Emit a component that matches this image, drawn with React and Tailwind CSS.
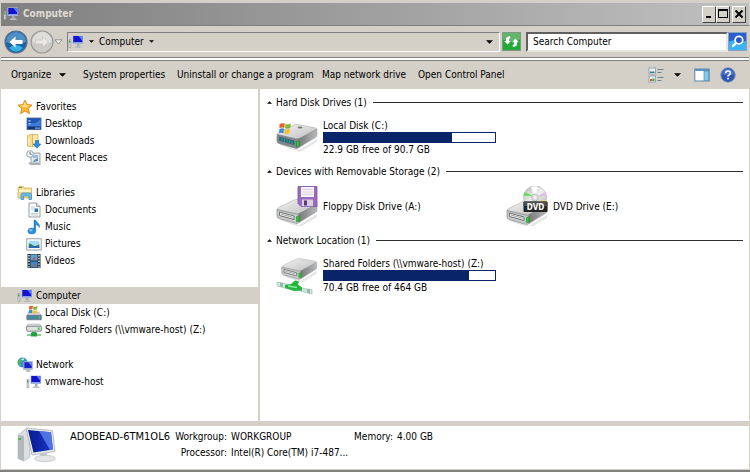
import { useState } from "react";

/* ---------- small icons (16px grid) ---------- */

function Svg({ size = "size-4", box = "0 0 16 16", children }) {
  return (
    <svg viewBox={box} className={`${size} shrink-0`} aria-hidden="true">
      {children}
    </svg>
  );
}

function PcIcon() {
  return (
    <Svg>
      <path d="M1 5.500h1.800v8H1z" fill="#dfe1e3" stroke="#8c9196" strokeWidth="0.6" />
      <rect x="1" y="6.500" width="1.400" height="2" fill="#3aa648" />
      <rect x="4.500" y="1.500" width="10.500" height="8.500" fill="#b4bfdc" />
      <rect x="5.300" y="2" width="9" height="7" fill="#1212cf" />
      <path d="M10.500 2h3.800v5z" fill="#5c7df0" />
      <path d="M5.300 8h9v1.500h-9z" fill="#8c9fe0" />
      <path d="M9 10h2.500v2.500H9z" fill="#a5a9b0" />
      <path d="M6.500 14l1.500-1.800h4.500L14 14z" fill="#b9bcc0" />
    </Svg>
  );
}

function StarIcon() {
  return (
    <Svg>
      <path
        d="M8 1l2 4.600 5 .5-3.700 3.400 1.100 5.200L8 12l-4.400 2.700 1.100-5.200L1 6.100l5-.5z"
        fill="#fdb52c"
        stroke="#dd8616"
        strokeWidth="0.9"
        strokeLinejoin="round"
      />
      <path d="M8 2.800l1.400 3.500 3.800.4-5.200 2-5.200-2 3.800-.4z" fill="#ffe08a" />
    </Svg>
  );
}

function DesktopIcon() {
  return (
    <Svg>
      <rect x="1" y="2" width="14" height="11.500" fill="#1f56b5" stroke="#4a6a9c" strokeWidth="0.8" />
      <path d="M1.500 9C6 5 9 10 14.500 3v7h-13z" fill="#3f7fdc" />
      <rect x="2.500" y="4" width="2" height="1.500" fill="#a9c6ee" />
      <rect x="2.500" y="7" width="2" height="1.500" fill="#a9c6ee" />
      <rect x="1.500" y="11" width="13" height="2.300" fill="#1d3566" />
      <rect x="9" y="11.500" width="5" height="1.300" fill="#6ea1dc" />
    </Svg>
  );
}

function DownloadsIcon() {
  return (
    <Svg>
      <path d="M1.500 2.500l5-1.500v13l-5-1z" fill="#f7dd8b" stroke="#d0a94c" strokeWidth="0.7" />
      <path d="M6.500 1.500h5.500v12H6.500z" fill="#fbe9ac" stroke="#d0a94c" strokeWidth="0.7" />
      <path d="M3 5v7" stroke="#fff6d0" />
      <path d="M9.500 7.500h3V11h2.300L11 15.200 7.200 11h2.300z" fill="#2d93e0" stroke="#1b68b4" strokeWidth="0.7" />
    </Svg>
  );
}

function RecentIcon() {
  return (
    <Svg>
      <path d="M5 3h9v11H5z" fill="#dfe7ec" stroke="#8e979e" strokeWidth="0.8" />
      <path d="M7 5h5v3H7z" fill="#9dbfd6" />
      <path d="M8 10l4-2v3l-5 1z" fill="#5d93ba" />
      <path d="M2 12.500h11l2 2.500H4z" fill="#aab2b7" />
      <circle cx="4" cy="4" r="3.300" fill="#f7f8f9" stroke="#8e979e" strokeWidth="0.9" />
      <path d="M4 2v2.200h1.800" fill="none" stroke="#555" strokeWidth="0.8" />
    </Svg>
  );
}

function LibrariesIcon() {
  return (
    <Svg>
      <path d="M1 3l1-1.500h4L7 3h7.500v10H1z" fill="#f3dc8c" stroke="#c9a64a" strokeWidth="0.7" />
      <path d="M2 4.500h11.500V7H2z" fill="#fff3c4" />
      <rect x="2" y="2" width="3" height="1" fill="#61ad4c" />
      <path d="M4 14.500V9.500Q4 8 5.500 8h7Q14.500 8 14.500 9.500V14.500H12V11H6.500V14.500Z" fill="#6dbce8" stroke="#3a88bd" strokeWidth="0.7" />
    </Svg>
  );
}

function DocumentsIcon() {
  return (
    <Svg>
      <path d="M3 1h7.500L14 4.500V15H3z" fill="#fbfcfd" stroke="#8b9197" strokeWidth="0.9" />
      <path d="M10.500 1v3.500H14" fill="#d8dde2" stroke="#8b9197" strokeWidth="0.8" />
      <path d="M5 5h4M5 7h3M5 11.500h7M5 13h7" stroke="#b4c1cd" strokeWidth="0.8" />
      <rect x="8.500" y="6.500" width="3.500" height="3.500" fill="#2d76bb" />
    </Svg>
  );
}

function MusicIcon() {
  return (
    <Svg>
      <path d="M8 1h1.600c.4 2.400 4.600 3 3.700 7.500-.8-2-2-2.600-3.600-2.700V12H8z" fill="#2e8fd8" stroke="#1c6db3" strokeWidth="0.5" />
      <ellipse cx="5.800" cy="12" rx="4" ry="3" fill="#2e8fd8" stroke="#1c6db3" strokeWidth="0.5" />
      <ellipse cx="4.800" cy="11.200" rx="1.800" ry="1" fill="#8fcaf3" />
    </Svg>
  );
}

function PicturesIcon() {
  return (
    <Svg>
      <rect x="0.800" y="2.800" width="14.400" height="11.200" fill="#fff" stroke="#8d9399" strokeWidth="0.9" />
      <rect x="2.800" y="4.800" width="10.500" height="7.200" fill="#a5dbf3" />
      <path d="M2.800 7.500q2 0 4 1.800t6.500-1V12H2.800z" fill="#2b7d6b" />
      <path d="M2.800 10.300h10.500V12H2.800z" fill="#2c67b1" />
    </Svg>
  );
}

function VideosIcon() {
  return (
    <Svg>
      <rect x="1.500" y="1" width="13" height="14" fill="#2b3238" />
      <rect x="4.500" y="1.500" width="7" height="6" fill="#5da3d4" />
      <rect x="4.500" y="8.500" width="7" height="6" fill="#3f8ac6" />
      <path d="M6 6.500l2-3 2 3zM6 13.500l2-3 2 3z" fill="#a5606a" />
      <path d="M3 2v13M13 2v13" stroke="#e7ecef" strokeWidth="1.400" strokeDasharray="1.400 1.400" />
    </Svg>
  );
}

function WinFlag() {
  return (
    <>
      <path d="M0 1.200Q2 0 4 .8L3.500 4Q1.800 3.300 0 4.200z" fill="#e8622c" />
      <path d="M4.500 1Q6.500 1.900 8.500.8L8 4Q6 5 4.100 4.100z" fill="#7fb83c" />
      <path d="M0 4.800Q1.800 3.900 3.400 4.600L2.900 8Q1 7.200-.5 8z" fill="#3c8be0" />
      <path d="M4 4.700Q6 5.600 7.900 4.600L7.400 8Q5.500 9 3.500 8.100z" fill="#f6c12c" />
    </>
  );
}

function LocalDiskSmallIcon() {
  return (
    <Svg>
      <path d="M3 7h9.500l3 3.500H.8z" fill="#d5d8db" stroke="#8b9094" strokeWidth="0.5" />
      <rect x="0.800" y="10.300" width="14.600" height="4.500" rx="0.600" fill="#5d7f99" stroke="#5b656e" strokeWidth="0.6" />
      <rect x="2" y="11.600" width="8" height="1.800" fill="#2e93a5" />
      <rect x="12.500" y="11.500" width="1.600" height="2" fill="#33d64a" />
      <g transform="translate(3 .3)">
        <WinFlag />
      </g>
    </Svg>
  );
}

function SharedSmallIcon() {
  return (
    <Svg>
      <path d="M2 2.200h12l1.500 2.300H.5z" fill="#eceeef" stroke="#93989c" strokeWidth="0.6" />
      <rect x="0.600" y="4.200" width="14.800" height="5" rx="1.200" fill="#dfe1e3" stroke="#73787c" strokeWidth="0.9" />
      <rect x="11.800" y="5.500" width="1.700" height="2.300" fill="#2ecc40" />
      <path d="M7 9.500h2V12h6v2H1v-2h6z" fill="#8cc79a" />
      <path d="M5 11l1.500-1h3L11 11v3.500H5z" fill="#22a13f" />
    </Svg>
  );
}

function NetworkIcon() {
  return (
    <Svg>
      <circle cx="5.500" cy="5.500" r="5" fill="#2f8ee0" />
      <path d="M2 2.500q3-2 5-1.500L5.500 4 3 5.500 4 8 2.500 9Q0 6 2 2.500z" fill="#54b948" />
      <path d="M4 2q2-1 3.500-.3L6 3.500z" fill="#d8efff" />
      <rect x="6.500" y="4.500" width="9" height="8" fill="#c4cde0" stroke="#8693ad" strokeWidth="0.5" />
      <rect x="7.300" y="5.200" width="7.500" height="6" fill="#1a1fc6" />
      <path d="M11 5.200h3.800v4z" fill="#6a8cf0" />
      <path d="M8.500 15l1.500-2.500h2.500L14 15z" fill="#b8bcc2" />
    </Svg>
  );
}

function Caret({ tiny }) {
  return (
    <Svg size={tiny ? "w-[5px] h-[3px]" : "w-[7px] h-1"} box="0 0 8 4">
      <path d="M0 0h8L4 4z" fill="#000" />
    </Svg>
  );
}

/* ---------- large drive icons (42px grid) ---------- */

function DriveBody({ dark }) {
  return (
    <>
      <path d="M3 34l20 7 18-11v3L24 43 6 37z" fill="#000" opacity="0.1" />
      <path d="M1 25.500Q1 24 3 23.300L18 16q2-.8 4-.4l17 3.200q3 .7 1 2L24 29.500q-2 1-4 .5z" fill="url(#driveTop)" stroke="#a5a5a5" strokeWidth="0.5" />
      <path d="M1 25.500L20 30q1.500.3 3-.4v9q-1.500 1.200-3.500.6L3 34.500q-2-.6-2-2.500z" fill={dark ? "#7c8a90" : "#c9cacb"} stroke="#77797b" strokeWidth="0.6" />
      <path d="M23 29.600L41 20v6q0 1.500-1.300 2.300L23 38.600z" fill="url(#driveSide)" stroke="#858789" strokeWidth="0.4" />
      <path d="M3.500 28l14.500 4v3.500L3.500 31.500z" fill={dark ? "#1f6a92" : "#ececec"} stroke="#56595b" strokeWidth="0.8" />
      {dark ? (
        <path d="M6 29v3M8.500 30v3M11 30.500v3M13.500 31v3M16 32v3" stroke="#2fb27d" strokeWidth="0.8" />
      ) : (
        <path d="M5 30l11.500 3.200" stroke="#8e9092" strokeWidth="0.8" />
      )}
      <path d="M20.500 32.500l2.500-.8v5.300l-2.500.8z" fill="#22d52c" stroke="#147a1b" strokeWidth="0.5" />
    </>
  );
}

function LocalDiskIcon() {
  return (
    <Svg size="w-[42px] h-10" box="0 8 42 40">
      <DriveBody dark />
      <ellipse cx="24" cy="18.500" rx="2.500" ry="0.900" fill="#777" />
      <g transform="translate(3.500 13.500) scale(1.350)">
        <WinFlag />
      </g>
    </Svg>
  );
}

function FloppyIcon() {
  return (
    <Svg size="w-[42px] h-10" box="0 2 42 40">
      <DriveBody />
      <path d="M22 2.500h19v20H25l-3-3z" fill="#9a6cc0" stroke="#7c50a3" strokeWidth="0.8" />
      <rect x="25" y="3" width="13" height="10" fill="#f6f3fa" />
      <path d="M26 5.500h11M26 8h11M26 10.500h11" stroke="#d3cadf" strokeWidth="0.8" />
      <rect x="26" y="15.500" width="11" height="6.700" fill="#d5d0dc" />
      <rect x="28" y="16.500" width="3" height="5" fill="#5c377f" />
    </Svg>
  );
}

function DvdIcon() {
  return (
    <Svg size="w-[42px] h-10" box="0 1 42 40">
      <DriveBody />
      <circle cx="29" cy="12.500" r="11.500" fill="url(#disc)" stroke="#b0b0b0" strokeWidth="0.6" />
      <path d="M27 11L18.500 7.500l-.8 3z" fill="#4fe04a" />
      <path d="M31 12l8.500-5q.8 2 .8 4z" fill="#dcbfe4" />
      <path d="M33 15l6.500 2 .8-2z" fill="#f1d27b" />
      <path d="M29 12.500L25 2q4-1.500 7 0z" fill="#fff" />
      <circle cx="29" cy="12.500" r="3.500" fill="#dedede" stroke="#aaa" strokeWidth="0.6" />
      <circle cx="29" cy="12.500" r="1.300" fill="#fff" />
      <rect x="17.500" y="16.500" width="24" height="10.500" rx="1" fill="#232323" />
      <path d="M17.500 17.500q0-1 1-1h22q1 0 1 1v3.500h-24z" fill="#4c4c4c" />
      <text x="29.500" y="24.600" textAnchor="middle" fontSize="8" fontWeight="bold" fill="#fff">
        DVD
      </text>
    </Svg>
  );
}

function SharedIcon() {
  return (
    <Svg size="w-[42px] h-10" box="0 1 42 40">
      <g transform="translate(5 -9) scale(.87)">
        <DriveBody />
      </g>
      <path d="M1 28l12 2.500v4.500L1 32zM24 34l12 1.500v4.500L24 37z" fill="#d5e3e4" stroke="#9db0b2" strokeWidth="0.6" />
      <path d="M4 28.500l3 .8v4l-3-.8zM31 35l3 .5v4l-3-.6z" fill="#8fbfa3" />
      <path d="M9 31l6-1 4-3.500 4 1-1 3 4 3v3l-8 .5-9-3z" fill="#22b43c" />
      <path d="M12 32l9 1.500" stroke="#8df09c" strokeWidth="1.400" />
    </Svg>
  );
}

function BigPcIcon() {
  return (
    <Svg size="w-10 h-9" box="0 0 40 36">
      <path d="M1 8l7-5.500 5 .5v27l-6 4-6-2.500z" fill="#dcdee0" stroke="#a9acaf" strokeWidth="0.6" />
      <path d="M1 8l6 1v25l-6-2.500z" fill="#b5b8bb" />
      <rect x="1.500" y="11" width="2.500" height="2" fill="#43b649" />
      <path d="M9 1l26.500 2.500L38 24.500 15 28z" fill="#e4e7ea" stroke="#a5a9ae" strokeWidth="0.7" />
      <path d="M11 3l23 2.200 2 17.300L16.500 25.500z" fill="url(#screen)" />
      <path d="M22 4l12 1.200 2 17.300-3 .5z" fill="#5c84ec" opacity="0.8" />
      <path d="M23 27l7-1v5h-6z" fill="#c4c7ca" />
      <ellipse cx="28" cy="31.500" rx="10.500" ry="3.200" fill="#e3e5e7" stroke="#b4b7ba" strokeWidth="0.6" />
    </Svg>
  );
}

function Gradients() {
  return (
    <svg className="absolute size-0" aria-hidden="true">
      <defs>
        <linearGradient id="driveTop" x1="0" y1="0" x2="1" y2="1">
          <stop offset="0" stopColor="#f4f4f4" />
          <stop offset="1" stopColor="#bcbcbd" />
        </linearGradient>
        <linearGradient id="driveSide" x1="0" y1="0" x2="1" y2="0">
          <stop offset="0" stopColor="#77797b" />
          <stop offset="1" stopColor="#b9babb" />
        </linearGradient>
        <linearGradient id="disc" x1="0" y1="0" x2="1" y2="1">
          <stop offset="0" stopColor="#b5b5b5" />
          <stop offset="0.500" stopColor="#f0f0f0" />
          <stop offset="1" stopColor="#b0b0b0" />
        </linearGradient>
        <linearGradient id="screen" x1="0" y1="0" x2="1" y2="0">
          <stop offset="0" stopColor="#081b8c" />
          <stop offset="1" stopColor="#1c35cc" />
        </linearGradient>
      </defs>
    </svg>
  );
}

/* ---------- data ---------- */

const TREE = [
  {
    name: "Favorites",
    Icon: StarIcon,
    children: [
      { name: "Desktop", Icon: DesktopIcon },
      { name: "Downloads", Icon: DownloadsIcon },
      { name: "Recent Places", Icon: RecentIcon },
    ],
  },
  {
    name: "Libraries",
    Icon: LibrariesIcon,
    children: [
      { name: "Documents", Icon: DocumentsIcon },
      { name: "Music", Icon: MusicIcon },
      { name: "Pictures", Icon: PicturesIcon },
      { name: "Videos", Icon: VideosIcon },
    ],
  },
  {
    name: "Computer",
    Icon: PcIcon,
    children: [
      { name: "Local Disk (C:)", Icon: LocalDiskSmallIcon },
      { name: "Shared Folders (\\\\vmware-host) (Z:)", Icon: SharedSmallIcon },
    ],
  },
  {
    name: "Network",
    Icon: NetworkIcon,
    children: [{ name: "vmware-host", Icon: PcIcon }],
  },
];

const SECTIONS = [
  {
    title: "Hard Disk Drives (1)",
    items: [{ name: "Local Disk (C:)", Icon: LocalDiskIcon, used: 75, note: "22.9 GB free of 90.7 GB" }],
  },
  {
    title: "Devices with Removable Storage (2)",
    items: [
      { name: "Floppy Disk Drive (A:)", Icon: FloppyIcon },
      { name: "DVD Drive (E:)", Icon: DvdIcon },
    ],
  },
  {
    title: "Network Location (1)",
    items: [
      { name: "Shared Folders (\\\\vmware-host) (Z:)", Icon: SharedIcon, used: 85, note: "70.4 GB free of 464 GB" },
    ],
  },
];

/* ---------- window parts ---------- */

function CaptionButton({ label, children }) {
  return (
    <button
      type="button"
      aria-label={label}
      className="flex h-[17px] w-[14px] items-center justify-center border border-t-white border-l-white border-r-[#404040] border-b-[#404040] bg-[#d4d0c8]"
    >
      <Svg size="size-[10px]" box="0 0 10 10">
        {children}
      </Svg>
    </button>
  );
}

function TitleBar() {
  return (
    <header className="flex h-[22px] items-center bg-linear-to-r from-[#808080] to-[#c0c0c0] pr-[3px] pl-[2px]">
      <PcIcon />
      <h1 className="ml-1 flex-1 text-[10px] font-bold text-[#dedbd4]">Computer</h1>
      <CaptionButton label="Minimize">
        <path d="M2 7h5v2H2z" />
      </CaptionButton>
      <CaptionButton label="Maximize">
        <path d="M0 0h10v9H0zM1 2v6h8V2z" fillRule="evenodd" />
      </CaptionButton>
      <div className="w-[2px]" />
      <CaptionButton label="Close">
        <path d="M1.500 1.500l7 7M8.500 1.500l-7 7" stroke="#000" strokeWidth="2" />
      </CaptionButton>
    </header>
  );
}

function NavBar() {
  const [query, setQuery] = useState("Search Computer");

  return (
    <div className="flex h-8 items-center border-t border-[#808080] pr-[2px] pl-[3px]">
      <button type="button" aria-label="Back" className="rounded-full">
        <Svg size="size-6" box="0 0 24 24">
          <circle cx="12" cy="12" r="11" fill="#1e62a4" stroke="#60718a" strokeWidth="1.200" />
          <path d="M2 12a10 10 0 0 1 20 0q-10 4-20 0z" fill="#4f90c4" />
          <path d="M5 18q7-6 14 0-7 7-14 0z" fill="#35b3e6" />
          <path d="M5.500 12l6-5.500v3.500h7v4h-7v3.500z" fill="#fff" />
        </Svg>
      </button>
      <button type="button" aria-label="Forward" className="ml-[2px] rounded-full">
        <Svg size="size-6" box="0 0 24 24">
          <circle cx="12" cy="12" r="11" fill="#cbcac6" stroke="#9a9a98" strokeWidth="1.200" />
          <path d="M2 12a10 10 0 0 1 20 0q-10 4-20 0z" fill="#dedddb" />
          <path d="M18.500 12l-6-5.500v3.500h-7v4h7v3.500z" fill="#e9e9e7" stroke="#c2c1bd" strokeWidth="0.700" />
        </Svg>
      </button>
      <button type="button" aria-label="Recent pages">
        <Svg size="w-[9px] h-[6px]" box="0 0 9 6">
          <path d="M.8.800h7.400L4.500 5z" fill="#f3f2ef" stroke="#8c8a86" strokeWidth="0.900" />
        </Svg>
      </button>

      <div className="ml-1 flex h-5 flex-1 items-center border border-t-[#808080] border-l-[#808080] border-r-white border-b-white">
        <PcIcon />
        <button type="button" aria-label="Root" className="px-[5px]">
          <Caret tiny />
        </button>
        <span>Computer</span>
        <button type="button" aria-label="Open Computer" className="px-[5px]">
          <Caret tiny />
        </button>
        <button type="button" aria-label="Previous locations" className="ml-auto px-[6px]">
          <Caret />
        </button>
      </div>
      <button type="button" aria-label="Refresh" className="ml-[2px] border border-[#7f9a7f]">
        <Svg size="size-[17px]" box="0 0 18 18">
          <rect width="18" height="18" fill="#22a838" />
          <path d="M0 0h18v7Q9 11 0 7z" fill="#63b56e" />
          <path d="M7 3.200L3.300 5v3.500H1.200L5 12.300l3.300-3.800H6.300V6.500L8 5z" fill="#fff" />
          <path d="M11 15l3.700-1.800V9.700h2.100L13 5.900 9.700 9.700h2v2L10 13.200z" fill="#fff" />
        </Svg>
      </button>
      <input
        type="text"
        aria-label="Search Computer"
        value={query}
        onChange={(e) => setQuery(e.target.value)}
        className="ml-[5px] h-5 w-[202px] border-2 border-t-[#606060] border-l-[#606060] border-r-[#e8e6e0] border-b-[#e8e6e0] bg-white px-[5px] outline-none"
      />
      <button type="button" aria-label="Search" className="border border-[#8aa0c0]">
        <Svg size="size-[17px]" box="0 0 18 18">
          <rect width="18" height="18" fill="#2a5fd0" />
          <path d="M0 9q9-3 18 0v9H0z" fill="#3cb4f4" />
          <circle cx="10.500" cy="7.500" r="4" fill="#2456c8" stroke="#fff" strokeWidth="1.800" />
          <path d="M7.500 10.500L3.500 14.500" stroke="#fff" strokeWidth="2.400" />
        </Svg>
      </button>
    </div>
  );
}

function Toolbar() {
  return (
    <div className="flex h-7 items-center pr-[13px] pl-[10px]">
      <button type="button" className="flex w-[72px] items-center gap-2">
        Organize <Caret />
      </button>
      <button type="button" className="w-[94px] text-left whitespace-nowrap">System properties</button>
      <button type="button" className="w-[145px] text-left whitespace-nowrap">Uninstall or change a program</button>
      <button type="button" className="w-24 text-left whitespace-nowrap">Map network drive</button>
      <button type="button" className="whitespace-nowrap">Open Control Panel</button>

      <div className="ml-auto flex items-center">
        <button type="button" aria-label="Change your view">
          <Svg>
            <rect x="1" y="1" width="6.500" height="6" fill="#e9f1f7" stroke="#8a97a2" strokeWidth="0.800" />
            <rect x="1" y="9" width="6.500" height="6" fill="#e9f1f7" stroke="#8a97a2" strokeWidth="0.800" />
            <path d="M2 4.500h4.500V6H2z" fill="#2f7f88" />
            <path d="M2 12h2.500v2H2z" fill="#d9542e" />
            <path d="M4.500 11.500h2V14h-2z" fill="#3ba844" />
            <path d="M9.500 2.500h6M9.500 5.500h4M9.500 10.500h6M9.500 13.500h4" stroke="#72818f" />
          </Svg>
        </button>
        <button type="button" aria-label="More view options" className="ml-[10px]">
          <Caret />
        </button>
        <button type="button" aria-label="Preview pane" className="ml-[13px]">
          <Svg>
            <rect x="0.800" y="2" width="14.400" height="12" fill="#fff" stroke="#5485ab" />
            <rect x="1" y="2" width="14" height="2" fill="#5a93bd" />
            <rect x="10" y="4" width="4.700" height="9.500" fill="#82c8ec" stroke="#4f8cb5" strokeWidth="0.700" />
          </Svg>
        </button>
        <button type="button" aria-label="Help" className="ml-[10px]">
          <Svg>
            <circle cx="8" cy="8" r="7.200" fill="#2a55b8" stroke="#7f8fa9" />
            <path d="M2 7a6 6 0 0 1 12 0q-6 3-12 0z" fill="#4670cc" />
            <path d="M5.600 6.300Q5.700 4 8 4t2.400 2.100Q10.400 7.300 9 8q-1 .5-1 1.600" fill="none" stroke="#fff" strokeWidth="1.600" />
            <rect x="7.200" y="10.700" width="1.700" height="1.700" fill="#fff" />
          </Svg>
        </button>
      </div>
    </div>
  );
}

function Tree() {
  const [selected, setSelected] = useState("Computer");

  const row = (node, pad) => (
    <button
      type="button"
      onClick={() => setSelected(node.name)}
      className={`flex h-[17px] w-full items-center gap-[3px] text-left whitespace-nowrap ${pad} ${
        selected === node.name ? "bg-[#d4d0c8]" : ""
      }`}
    >
      <node.Icon />
      {node.name}
    </button>
  );

  return (
    <nav className="w-[259px] shrink-0 border-r-2 border-[#d4d0c8] pt-[9px]">
      <ul className="flex flex-col gap-[18px]">
        {TREE.map((group) => (
          <li key={group.name}>
            {row(group, "pl-4")}
            <ul>
              {group.children.map((child) => (
                <li key={child.name}>{row(child, "pl-[25px]")}</li>
              ))}
            </ul>
          </li>
        ))}
      </ul>
    </nav>
  );
}

function Drive({ name, Icon, used, note }) {
  return (
    <li className="flex h-[52px] w-[230px] items-center gap-[5px]">
      <Icon />
      <div className="whitespace-nowrap">
        <p className="leading-[13px]">{name}</p>
        {note && (
          <>
            <div
              role="meter"
              aria-label={`${name} used space`}
              aria-valuenow={used}
              className="h-[11px] w-[173px] border border-[#0a246a] bg-white"
            >
              <div className="h-full bg-[#0a246a]" style={{ width: `${used}%` }} />
            </div>
            <p className="leading-[13px]">{note}</p>
          </>
        )}
      </div>
    </li>
  );
}

function Section({ title, items }) {
  return (
    <section>
      <h2 className="flex h-[17px] items-center">
        <Svg size="w-[5px] h-[3px]" box="0 0 8 4">
          <path d="M0 4h8L4 0z" />
        </Svg>
        <span className="mr-[6px] ml-1 whitespace-nowrap">{title}</span>
        <span className="h-px flex-1 bg-[#303030]" />
      </h2>
      <ul className="flex flex-wrap pl-[9px]">
        {items.map((item) => (
          <Drive key={item.name} {...item} />
        ))}
      </ul>
    </section>
  );
}

function DetailsPane() {
  return (
    <footer className="flex h-[43px] items-start bg-white pt-px pl-4">
      <BigPcIcon />
      <p className="mt-[2px] ml-[13px] w-[105px] text-[11px] leading-4 whitespace-nowrap">ADOBEAD-6TM1OL6</p>
      <dl className="mt-[2px] grid grid-cols-[52px_119px_39px_auto] gap-x-1 leading-4 whitespace-nowrap">
        <dt className="text-right">Workgroup:</dt>
        <dd>WORKGROUP</dd>
        <dt className="text-right">Memory:</dt>
        <dd>4.00 GB</dd>
        <dt className="text-right">Processor:</dt>
        <dd>Intel(R) Core(TM) i7-487...</dd>
      </dl>
    </footer>
  );
}

export default function App() {
  return (
    <div className="flex min-h-screen flex-col border-b-2 border-[#808080] bg-[#d4d0c8] pt-[3px] pr-px pb-px pl-px font-['DejaVu_Sans_Condensed','DejaVu_Sans',sans-serif] text-[10px] leading-4 text-black">
      <Gradients />
      <TitleBar />
      <NavBar />
      <div className="h-1 border-y border-t-[#808080] border-b-[#808080] bg-white" />
      <Toolbar />
      <main className="flex flex-1 bg-white">
        <Tree />
        <div className="min-w-0 flex-1 pt-[5px] pr-[6px] pl-[7px]">
          {SECTIONS.map((s) => (
            <Section key={s.title} {...s} />
          ))}
        </div>
      </main>
      <div className="h-[5px]" />
      <DetailsPane />
    </div>
  );
}
